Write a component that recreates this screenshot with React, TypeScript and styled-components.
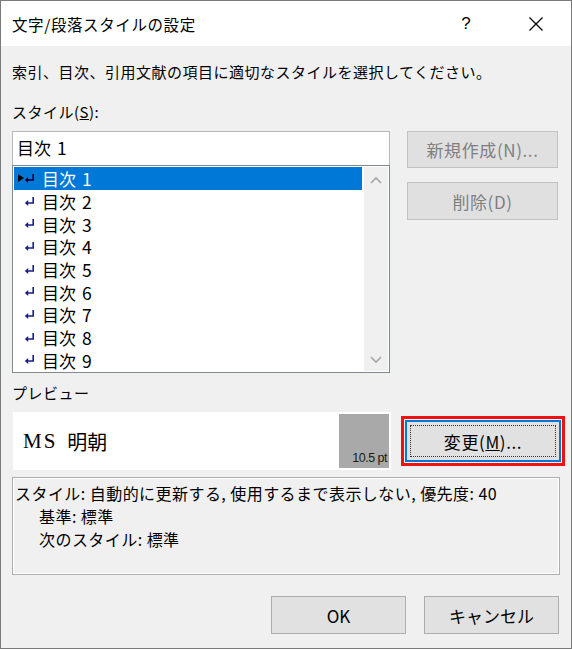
import React from 'react';
import styled, { createGlobalStyle } from 'styled-components';

const GlobalStyle = createGlobalStyle`
	html, body {
		margin: 0;
		padding: 0;
		background: #ffffff;
	}
	body {
		font-family: 'Noto Sans CJK JP', 'Noto Sans', sans-serif;
		color: #000000;
	}
`;

const Window = styled.div`
	box-sizing: border-box;
	width: 572px;
	height: 649px;
	border: 1px solid #7a7a7a;
	background: #f0f0f0;
	display: flex;
	flex-direction: column;
	overflow: hidden;
`;

const TitleBar = styled.div`
	height: 45px;
	background: #ffffff;
	display: flex;
	align-items: center;
	padding-left: 11px;
`;

const Title = styled.div`
	flex: 1;
	font-size: 15.5px;
	letter-spacing: 0.6px;
	line-height: 20px;
	padding-top: 1px;
`;

const TitleButton = styled.div`
	width: 70px;
	height: 45px;
	display: flex;
	align-items: center;
	justify-content: center;
	font-family: 'Liberation Sans', sans-serif;
	font-size: 17px;
`;

const Body = styled.div`
	flex: 1;
	display: flex;
	flex-direction: column;
	padding: 0 11px;
	font-size: 15px;
`;

const Text = styled.div<{ $top: number }>`
	margin-top: ${(p) => p.$top}px;
	line-height: 22px;
	letter-spacing: 0.5px;
	white-space: nowrap;
`;

const MainRow = styled.div`
	display: grid;
	grid-template-columns: 378px 151px;
	column-gap: 17px;
	margin-top: 8px;
`;

const LeftCol = styled.div`
	display: flex;
	flex-direction: column;
`;

const RightCol = styled.div`
	display: flex;
	flex-direction: column;
	gap: 14px;
`;

const StyleInput = styled.div`
	box-sizing: border-box;
	height: 34px;
	background: #ffffff;
	border: 1px solid #b8b8b8;
	border-bottom: none;
	padding-left: 4px;
	font-size: 17px;
	line-height: 32px;
`;

const Num = styled.span`
	margin-left: 6px;
	font-size: 17.5px;
`;

const ListBox = styled.div`
	box-sizing: border-box;
	height: 208px;
	background: #ffffff;
	border: 1px solid #828790;
	display: flex;
	padding: 1px;
`;

const Items = styled.div`
	flex: 1;
	display: flex;
	flex-direction: column;
`;

const Item = styled.div<{ $sel?: boolean }>`
	height: 22.7px;
	display: flex;
	align-items: center;
	background: ${(p) => (p.$sel ? '#0078d7' : 'transparent')};
	color: ${(p) => (p.$sel ? '#ffffff' : '#000000')};
	font-size: 17px;
	padding-left: 4px;
	white-space: nowrap;
`;

const Marker = styled.span`
	width: 6px;
	display: flex;
	align-items: center;
`;

const ItemLabel = styled.span`
	margin-left: 7px;
	line-height: 22px;
	padding-top: 2px;
`;

const ScrollBar = styled.div`
	width: 24px;
	background: #f0f0f0;
	display: flex;
	flex-direction: column;
	justify-content: space-between;
	align-items: center;
	padding: 9px 0 7px;
	margin-left: 2px;
`;

const Button = styled.div<{ $disabled?: boolean; $h?: number }>`
	box-sizing: border-box;
	height: ${(p) => p.$h ?? 37}px;
	background: ${(p) => (p.$disabled ? '#e0e0e0' : '#e1e1e1')};
	border: 1px solid ${(p) => (p.$disabled ? '#c2c2c2' : '#adadad')};
	color: ${(p) => (p.$disabled ? '#7f7f7f' : '#000000')};
	display: flex;
	align-items: center;
	justify-content: center;
	font-size: 17px;
	letter-spacing: 0.6px;
	white-space: nowrap;
`;

const PreviewRow = styled.div`
	display: grid;
	grid-template-columns: 378px 164px;
	column-gap: 10px;
	align-items: center;
	margin-top: 8px;
	margin-left: 1px;
	height: 58px;
`;

const PreviewBox = styled.div`
	box-sizing: border-box;
	height: 58px;
	border: 2px solid #ffffff;
	display: flex;
`;

const PreviewText = styled.div`
	flex: 1;
	background: #ffffff;
	display: flex;
	align-items: center;
	padding-left: 8px;
	font-size: 20px;
`;

const Latin = styled.span`
	font-family: 'Liberation Serif', serif;
	font-size: 21px;
	letter-spacing: 2px;
	margin-right: 10px;
`;

const PreviewSize = styled.div`
	width: 48px;
	background: #a9a9a9;
	display: flex;
	align-items: flex-end;
	justify-content: flex-end;
	padding: 0 2px 3px 0;
	font-family: 'Liberation Sans', sans-serif;
	font-size: 12.5px;
	letter-spacing: -0.5px;
	color: #1a1a1a;
`;

const Highlight = styled.div`
	box-sizing: border-box;
	height: 50px;
	border: 3px solid #ee1111;
	padding: 1px;
	display: flex;
`;

const FocusButton = styled.div`
	flex: 1;
	box-sizing: border-box;
	border: 2px solid #0078d7;
	background: #e1e1e1;
	padding: 3px;
	display: flex;
`;

const FocusInner = styled.div`
	flex: 1;
	border: 1px dotted #333333;
	display: flex;
	align-items: center;
	justify-content: center;
	font-size: 17px;
	letter-spacing: 0.6px;
`;

const Description = styled.div`
	box-sizing: border-box;
	margin-top: 7px;
	width: 548px;
	height: 98px;
	border: 1px solid #adadad;
	box-shadow: inset 1px 1px 0 #ffffff, inset -1px -1px 0 #ffffff;
	padding: 4px 0 0 2px;
	font-size: 16px;
	letter-spacing: 0.45px;
	line-height: 23px;
	white-space: nowrap;
`;

const Indent = styled.div`
	padding-left: 24px;
`;

const Footer = styled.div`
	display: flex;
	justify-content: flex-end;
	gap: 18px;
	margin-top: 21px;
	padding-right: 1px;
`;

const FooterButton = styled(Button)`
	width: 135px;
	height: 38px;
	letter-spacing: 0;
`;

const ReturnMark = ({ color = '#1c1c8a' }: { color?: string }) => (
	<svg width='11' height='11' viewBox='0 0 11 11'>
		<path d='M9.2 1 V7 H3' stroke={color} strokeWidth='1.6' fill='none' />
		<path d='M0.8 7 L4.2 4 L4.2 10 Z' fill={color} />
	</svg>
);

const Chevron = ({ up }: { up?: boolean }) => (
	<svg width='12' height='8' viewBox='0 0 12 8'>
		<path d={up ? 'M1 7 L6 2 L11 7' : 'M1 1 L6 6 L11 1'} stroke='#a6a6a6' strokeWidth='1.6' fill='none' />
	</svg>
);

const items = [1, 2, 3, 4, 5, 6, 7, 8, 9];

export default function App() {
	return (
		<>
			<GlobalStyle />
			<Window>
				<TitleBar>
					<Title>文字/段落スタイルの設定</Title>
					<TitleButton>?</TitleButton>
					<TitleButton>
						<svg width='16' height='16' viewBox='0 0 16 16'>
							<path d='M1.5 1.5 L14.5 14.5 M14.5 1.5 L1.5 14.5' stroke='#000' strokeWidth='1.2' />
						</svg>
					</TitleButton>
				</TitleBar>
				<Body>
					<Text $top={15}>索引、目次、引用文献の項目に適切なスタイルを選択してください。</Text>
					<Text $top={18}>
						スタイル(<u>S</u>):
					</Text>
					<MainRow>
						<LeftCol>
							<StyleInput>
								目次<Num>1</Num>
							</StyleInput>
							<ListBox>
								<Items>
									{items.map((n, i) => (
										<Item key={n} $sel={i === 0}>
											<Marker>
												{i === 0 && (
													<svg width='6' height='8' viewBox='0 0 6 8'>
														<path d='M0 0 L6 4 L0 8 Z' fill='#000' />
													</svg>
												)}
											</Marker>
											<ReturnMark color={i === 0 ? '#000033' : '#1c1c8a'} />
											<ItemLabel>
												目次<Num>{n}</Num>
											</ItemLabel>
										</Item>
									))}
								</Items>
								<ScrollBar>
									<Chevron up />
									<Chevron />
								</ScrollBar>
							</ListBox>
						</LeftCol>
						<RightCol>
							<Button $disabled>新規作成(N)...</Button>
							<Button $disabled $h={38}>
								削除(D)
							</Button>
						</RightCol>
					</MainRow>
					<Text $top={9}>プレビュー</Text>
					<PreviewRow>
						<PreviewBox>
							<PreviewText>
								<Latin>MS</Latin>明朝
							</PreviewText>
							<PreviewSize>10.5 pt</PreviewSize>
						</PreviewBox>
						<Highlight>
							<FocusButton>
								<FocusInner>
									変更(<u>M</u>)...
								</FocusInner>
							</FocusButton>
						</Highlight>
					</PreviewRow>
					<Description>
						<div>スタイル: 自動的に更新する, 使用するまで表示しない, 優先度: 40</div>
						<Indent>基準: 標準</Indent>
						<Indent>次のスタイル: 標準</Indent>
					</Description>
					<Footer>
						<FooterButton>OK</FooterButton>
						<FooterButton>キャンセル</FooterButton>
					</Footer>
				</Body>
			</Window>
		</>
	);
}
